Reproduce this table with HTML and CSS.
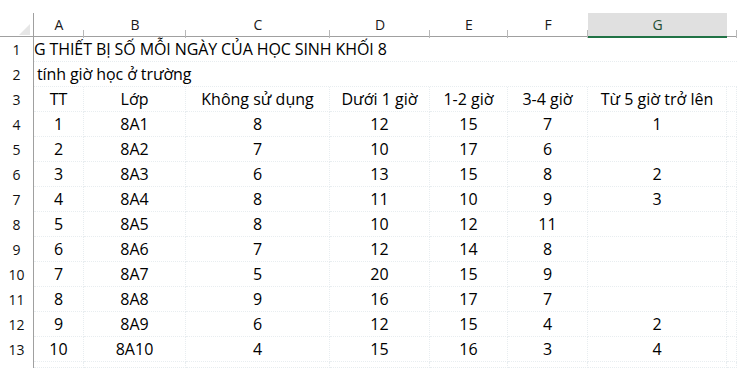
FILE: index.html
```html
<!DOCTYPE html>
<html lang="vi">
<head>
<meta charset="utf-8">
<title>Sheet</title>
<link rel="stylesheet" href="styles.css">
</head>
<body>
<div class="sheet">
  <div class="toparea"></div>
  <div class="row colhead">
    <div class="corner"><span class="tri"></span></div>
    <div class="ch">A</div>
    <div class="ch">B</div>
    <div class="ch">C</div>
    <div class="ch">D</div>
    <div class="ch">E</div>
    <div class="ch">F</div>
    <div class="ch sel">G</div>
    <div class="ch"></div>
  </div>

  <div class="row">
    <div class="rh">1</div>
    <div class="c title">G THIẾT BỊ SỐ MỖI NGÀY CỦA HỌC SINH KHỐI 8</div>
  </div>
  <div class="row">
    <div class="rh">2</div>
    <div class="c title sub">tính giờ học ở trường</div>
  </div>
  <div class="row">
    <div class="rh">3</div>
    <div class="c">TT</div><div class="c">Lớp</div><div class="c">Không sử dụng</div><div class="c">Dưới 1 giờ</div><div class="c">1-2 giờ</div><div class="c">3-4 giờ</div><div class="c">Từ 5 giờ trở lên</div><div class="c"></div>
  </div>
  <div class="row">
    <div class="rh">4</div>
    <div class="c">1</div><div class="c">8A1</div><div class="c">8</div><div class="c">12</div><div class="c">15</div><div class="c">7</div><div class="c">1</div><div class="c"></div>
  </div>
  <div class="row">
    <div class="rh">5</div>
    <div class="c">2</div><div class="c">8A2</div><div class="c">7</div><div class="c">10</div><div class="c">17</div><div class="c">6</div><div class="c"></div><div class="c"></div>
  </div>
  <div class="row">
    <div class="rh">6</div>
    <div class="c">3</div><div class="c">8A3</div><div class="c">6</div><div class="c">13</div><div class="c">15</div><div class="c">8</div><div class="c">2</div><div class="c"></div>
  </div>
  <div class="row">
    <div class="rh">7</div>
    <div class="c">4</div><div class="c">8A4</div><div class="c">8</div><div class="c">11</div><div class="c">10</div><div class="c">9</div><div class="c">3</div><div class="c"></div>
  </div>
  <div class="row">
    <div class="rh">8</div>
    <div class="c">5</div><div class="c">8A5</div><div class="c">8</div><div class="c">10</div><div class="c">12</div><div class="c">11</div><div class="c"></div><div class="c"></div>
  </div>
  <div class="row">
    <div class="rh">9</div>
    <div class="c">6</div><div class="c">8A6</div><div class="c">7</div><div class="c">12</div><div class="c">14</div><div class="c">8</div><div class="c"></div><div class="c"></div>
  </div>
  <div class="row">
    <div class="rh">10</div>
    <div class="c">7</div><div class="c">8A7</div><div class="c">5</div><div class="c">20</div><div class="c">15</div><div class="c">9</div><div class="c"></div><div class="c"></div>
  </div>
  <div class="row">
    <div class="rh">11</div>
    <div class="c">8</div><div class="c">8A8</div><div class="c">9</div><div class="c">16</div><div class="c">17</div><div class="c">7</div><div class="c"></div><div class="c"></div>
  </div>
  <div class="row">
    <div class="rh">12</div>
    <div class="c">9</div><div class="c">8A9</div><div class="c">6</div><div class="c">12</div><div class="c">15</div><div class="c">4</div><div class="c">2</div><div class="c"></div>
  </div>
  <div class="row">
    <div class="rh">13</div>
    <div class="c">10</div><div class="c">8A10</div><div class="c">4</div><div class="c">15</div><div class="c">16</div><div class="c">3</div><div class="c">4</div><div class="c"></div>
  </div>
  <div class="row partial">
    <div class="rh"></div>
    <div class="c"></div><div class="c"></div><div class="c"></div><div class="c"></div><div class="c"></div><div class="c"></div><div class="c"></div><div class="c"></div>
  </div>
</div>
</body>
</html>
```

FILE: styles.css
```css
* { box-sizing: border-box; }
html, body {
  margin: 0;
  padding: 0;
  background: #ffffff;
}
body {
  width: 737px;
  height: 368px;
  overflow: hidden;
  font-family: "Open Sans", "Noto Sans", sans-serif;
  color: #000;
}
.sheet {
  width: 737px;
}
.toparea {
  height: 13px;
}
.row {
  display: grid;
  grid-template-columns: 34px 50px 102px 144px 100px 78px 80px 139px 10px;
  height: 25px;
}
.row.partial {
  height: 6px;
}
.colhead {
  height: 24px;
  border-bottom: 1px solid #a0a0a0;
}
.corner {
  position: relative;
  border-right: 1px solid #a0a0a0;
}
.tri {
  position: absolute;
  right: 3px;
  bottom: 3px;
  width: 0;
  height: 0;
  border-left: 11px solid transparent;
  border-bottom: 11px solid #e6e6e6;
}
.ch {
  position: relative;
  font-size: 14px;
  line-height: 22px;
  padding-top: 1px;
  text-align: center;
  color: #1a1a1a;
}
.ch::after {
  content: "";
  position: absolute;
  right: 0;
  bottom: 0;
  width: 1px;
  height: 8px;
  background: #b8b8b8;
}
.ch.sel {
  background: #e0e0e0;
  color: #1f4e33;
  border-bottom: 2px solid #217346;
}
.ch.sel::after {
  display: none;
}
.rh {
  font-size: 14px;
  line-height: 25px;
  text-align: center;
  color: #111;
  border-right: 1px solid #a0a0a0;
}
.c {
  font-size: 16px;
  line-height: 23px;
  padding-top: 1px;
  text-align: center;
  white-space: nowrap;
  border-right: 1px dotted #e8edf0;
  border-bottom: 1px dotted #e8edf0;
}
.title {
  grid-column: 2 / -1;
  text-align: left;
  padding-left: 0;
  letter-spacing: -0.1px;
  border-right: none;
}
.title.sub {
  padding-left: 3px;
}
```
